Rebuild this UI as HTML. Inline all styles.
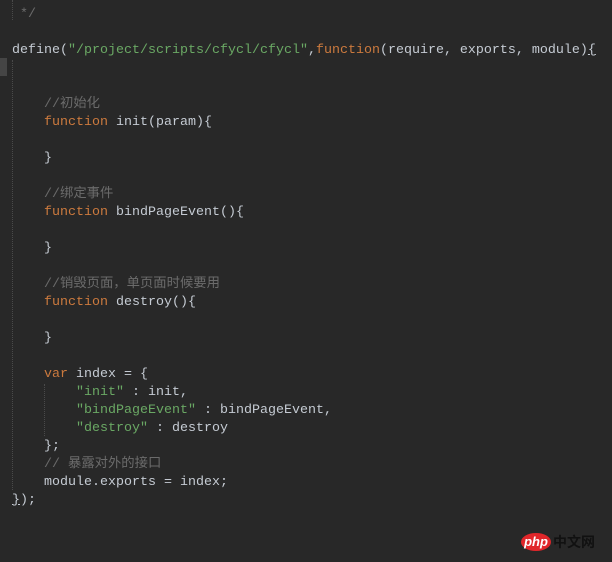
<!DOCTYPE html>
<html><head><meta charset="utf-8"><style>
html,body{margin:0;padding:0;background:#282828;width:612px;height:562px;overflow:hidden}
.c{position:absolute;left:12px;top:6px;font-family:"Liberation Mono","Noto Sans CJK SC",monospace;font-size:13.33px;line-height:18px;color:#c5cbd3;white-space:pre}
.k{color:#cc7a3e}.s{color:#6aa864}.m{color:#6b6b6b}
.g{position:absolute;border-left:1px dotted #4a4a4a}
</style></head><body>
<div style="position:absolute;left:0;top:58px;width:7px;height:18px;background:#454545"></div>
<div class="g" style="left:12px;top:0;height:20px"></div>
<div class="g" style="left:12px;top:60px;height:430px"></div>
<div class="g" style="left:44px;top:384px;height:52px"></div>
<div class="c"><span class="m"> */</span>

define(<span class="s">"/project/scripts/cfycl/cfycl"</span>,<span class="k">function</span>(require, exports, module)<u>{</u>


    <span class="m">//初始化</span>
    <span class="k">function</span> init(param){

    }

    <span class="m">//绑定事件</span>
    <span class="k">function</span> bindPageEvent(){

    }

    <span class="m">//销毁页面，单页面时候要用</span>
    <span class="k">function</span> destroy(){

    }

    <span class="k">var</span> index = {
        <span class="s">"init"</span> : init,
        <span class="s">"bindPageEvent"</span> : bindPageEvent,
        <span class="s">"destroy"</span> : destroy
    };
    <span class="m">// 暴露对外的接口</span>
    module.exports = index;
<u>}</u>);</div>
<div style="position:absolute;left:521px;top:533px;width:30px;height:18px;border-radius:50%;background:#e0262a;color:#fff;font:italic bold 13px 'Liberation Sans',sans-serif;text-align:center;line-height:17px">php</div>
<div style="position:absolute;left:553px;top:533px;font:bold 14px 'Noto Sans CJK SC',sans-serif;color:#111;line-height:18px">中文网</div>
</body></html>
